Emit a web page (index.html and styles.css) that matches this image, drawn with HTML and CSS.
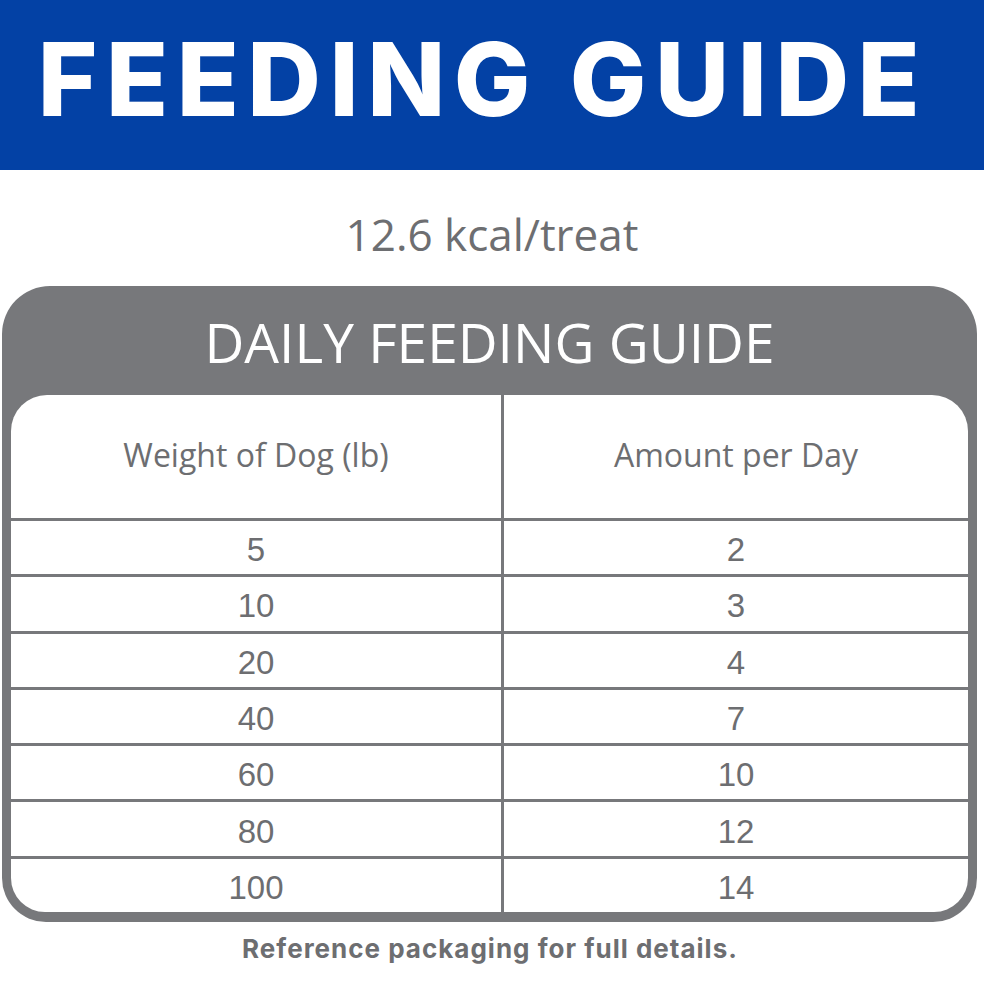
FILE: index.html
```html
<!DOCTYPE html>
<html>
<head>
<meta charset="utf-8">
<link rel="stylesheet" href="styles.css">
</head>
<body>
<header class="banner"><h1>FEEDING GUIDE</h1></header>
<p class="kcal">12.6 kcal/treat</p>
<section class="card">
  <h2 class="card-title">DAILY FEEDING GUIDE</h2>
  <div class="table">
    <div class="row head"><div class="cell left">Weight of Dog (lb)</div><div class="cell">Amount per Day</div></div>
    <div class="row"><div class="cell left">5</div><div class="cell">2</div></div>
    <div class="row"><div class="cell left">10</div><div class="cell">3</div></div>
    <div class="row"><div class="cell left">20</div><div class="cell">4</div></div>
    <div class="row"><div class="cell left">40</div><div class="cell">7</div></div>
    <div class="row"><div class="cell left">60</div><div class="cell">10</div></div>
    <div class="row"><div class="cell left">80</div><div class="cell">12</div></div>
    <div class="row"><div class="cell left">100</div><div class="cell">14</div></div>
  </div>
</section>
<p class="note">Reference packaging for full details.</p>
</body>
</html>
```
FILE: styles.css
```css
html, body { margin: 0; padding: 0; background: #fff; }
body { width: 984px; height: 984px; overflow: hidden; }
.banner {
  background: #0341a5;
  height: 170px;
  display: flex;
  align-items: center;
  justify-content: center;
  box-sizing: border-box;
  padding-bottom: 12px;
}
.banner h1 {
  margin: 0;
  color: #fff;
  font-family: Inter, "Open Sans", sans-serif;
  font-weight: 800;
  font-size: 102px;
  line-height: 1;
  letter-spacing: 8.5px;
  padding-right: 18px;
}
.kcal {
  margin: 0;
  height: 116px;
  display: flex;
  align-items: center;
  justify-content: center;
  font-family: "Open Sans", sans-serif;
  font-size: 44px;
  color: #6d6e71;
  padding-top: 12px;
  box-sizing: border-box;
}
.card {
  margin: 0 7px 0 2px;
  background: #77787b;
  border-radius: 48px 48px 44px 44px;
  padding: 0 9px 10px 9px;
}
.card-title {
  margin: 0;
  height: 109px;
  display: flex;
  align-items: center;
  justify-content: center;
  font-family: "Open Sans", sans-serif;
  font-weight: 400;
  font-size: 55px;
  color: #fff;
  padding-top: 2px;
  box-sizing: border-box;
}
.table {
  background: #fff;
  border-radius: 36px 36px 34px 34px;
  overflow: hidden;
}
.row {
  display: grid;
  grid-template-columns: 493px 1fr;
  height: 56.3px;
  border-top: 3px solid #77787b;
  box-sizing: border-box;
}
.row.head { height: 123px; border-top: 0; }
.cell {
  display: flex;
  align-items: center;
  justify-content: center;
  font-family: "Liberation Sans", Arial, sans-serif;
  font-size: 33px;
  color: #6d6e71;
  padding-top: 5px;
}
.cell.left { border-right: 3px solid #77787b; }
.head .cell {
  font-family: "Open Sans", sans-serif;
  font-size: 32px;
  padding-top: 0;
  padding-bottom: 4px;
}
.note {
  margin: 11px 0 0;
  text-align: center;
  font-family: Inter, sans-serif;
  font-weight: 700;
  font-size: 26px;
  letter-spacing: 1px;
  color: #6d6e71;
  padding-right: 4px;
}
```
